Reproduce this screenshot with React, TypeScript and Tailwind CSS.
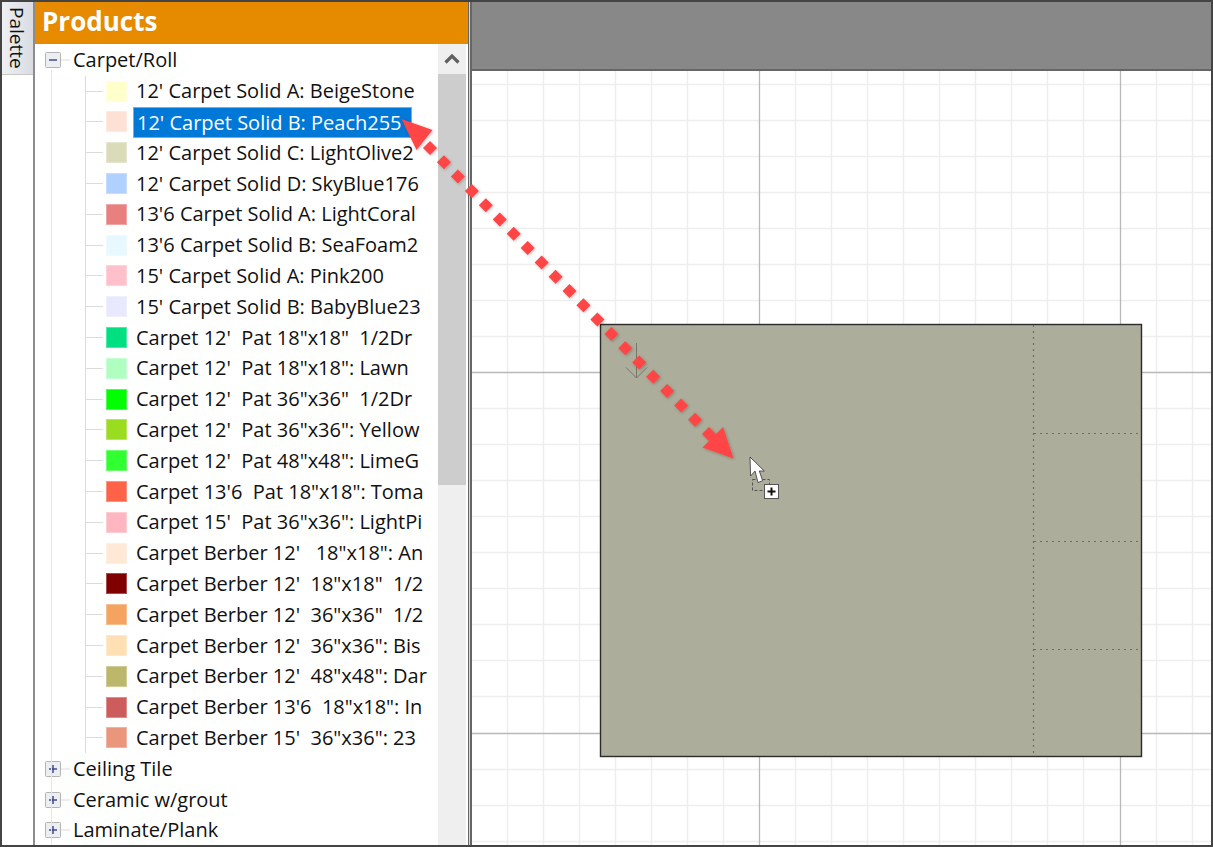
import React from 'react';

const items: { color: string; label: string; selected?: boolean }[] = [
  { color: '#FFFFCC', label: "12' Carpet Solid A: BeigeStone" },
  { color: '#FFE0D5', label: "12' Carpet Solid B: Peach255", selected: true },
  { color: '#DADBB8', label: "12' Carpet Solid C: LightOlive2" },
  { color: '#B0D0FF', label: "12' Carpet Solid D: SkyBlue176" },
  { color: '#E98080', label: "13'6 Carpet Solid A: LightCoral" },
  { color: '#E8F8FF', label: "13'6 Carpet Solid B: SeaFoam2" },
  { color: '#FFC0CB', label: "15' Carpet Solid A: Pink200" },
  { color: '#E8E8FF', label: "15' Carpet Solid B: BabyBlue23" },
  { color: '#00E080', label: 'Carpet 12\'  Pat 18"x18"  1/2Dr' },
  { color: '#AEFFC0', label: 'Carpet 12\'  Pat 18"x18": Lawn' },
  { color: '#00FF00', label: 'Carpet 12\'  Pat 36"x36"  1/2Dr' },
  { color: '#9ADC20', label: 'Carpet 12\'  Pat 36"x36": Yellow' },
  { color: '#30FF30', label: 'Carpet 12\'  Pat 48"x48": LimeG' },
  { color: '#FF6347', label: 'Carpet 13\'6  Pat 18"x18": Toma' },
  { color: '#FFB6C1', label: 'Carpet 15\'  Pat 36"x36": LightPi' },
  { color: '#FFE8D6', label: 'Carpet Berber 12\'   18"x18": An' },
  { color: '#800000', label: 'Carpet Berber 12\'  18"x18"  1/2' },
  { color: '#F4A460', label: 'Carpet Berber 12\'  36"x36"  1/2' },
  { color: '#FFE0B5', label: 'Carpet Berber 12\'  36"x36": Bis' },
  { color: '#BDB76B', label: 'Carpet Berber 12\'  48"x48": Dar' },
  { color: '#CD5C5C', label: 'Carpet Berber 13\'6  18"x18": In' },
  { color: '#E9967A', label: 'Carpet Berber 15\'  36"x36": 23' },
];

const Expander = ({ open }: { open?: boolean }) => (
  <svg width="30" height="18" viewBox="0 0 30 18" className="shrink-0">
    <line x1="16" y1="9" x2="25" y2="9" stroke="#dcdcdc" />
    <rect x="0.5" y="1.5" width="15" height="15" rx="1" fill="#eceef2" stroke="#b4b4b4" />
    <line x1="4" y1="9" x2="12" y2="9" stroke="#31418f" strokeWidth="1.4" />
    {!open && <line x1="8" y1="5" x2="8" y2="13" stroke="#31418f" strokeWidth="1.4" />}
  </svg>
);

const Category = ({ label, open }: { label: string; open?: boolean }) => (
  <div className="flex items-center h-[30.8px] pl-[10px]">
    <Expander open={open} />
    <span className="text-[#111] -ml-[2px]">{label}</span>
  </div>
);

const ItemRow = ({ color, label, selected }: { color: string; label: string; selected?: boolean }) => (
  <div className="flex items-center h-[30.8px] pl-[51px]">
    <div className="w-[17px] h-px bg-[#dcdcdc] shrink-0" />
    <div className="w-[21px] h-[21px] ml-[3px] shrink-0 border border-white/30" style={{ backgroundColor: color }} />
    {selected ? (
      <span className="ml-[6px] pl-[3px] w-[279px] h-[31px] leading-[29px] bg-[#0078D7] border border-[#c89a70] text-white shrink-0">
        {label}
      </span>
    ) : (
      <span className="ml-[9px] text-[#111] shrink-0">{label}</span>
    )}
  </div>
);

const diamonds = Array.from({ length: 21 }, (_, i) => ({ x: 430 + i * 13.95, y: 148 + i * 14.3 }));

const Canvas = () => (
  <svg width="741" height="776" viewBox="472 71 741 776" className="block">
    <rect x="472" y="71" width="741" height="776" fill="#ffffff" />
    {[507, 543, 579, 615, 651, 687, 723, 795, 831, 867, 903, 939, 975, 1011, 1047, 1083, 1156, 1192].map((x) => (
      <line key={x} x1={x + 0.5} y1="71" x2={x + 0.5} y2="847" stroke="#eeeeee" strokeWidth="1.5" />
    ))}
    {[84, 120, 156, 192, 228, 264, 300, 336, 408, 444, 480, 516, 552, 588, 624, 660, 696, 769, 805, 841].map((y) => (
      <line key={y} x1="472" y1={y + 0.5} x2="1213" y2={y + 0.5} stroke="#eeeeee" strokeWidth="1.5" />
    ))}
    <line x1="759.5" y1="71" x2="759.5" y2="847" stroke="#b8b8b8" strokeWidth="1.3" />
    <line x1="1120.5" y1="71" x2="1120.5" y2="847" stroke="#b8b8b8" strokeWidth="1.3" />
    <line x1="472" y1="372.5" x2="1213" y2="372.5" stroke="#b8b8b8" strokeWidth="1.3" />
    <line x1="472" y1="733.5" x2="1213" y2="733.5" stroke="#b8b8b8" strokeWidth="1.3" />

    <rect x="600.5" y="324.5" width="541" height="432" fill="#ACAD9A" stroke="#2b2b2b" strokeWidth="1.4" />
    <line x1="1033.5" y1="325" x2="1033.5" y2="756" stroke="#6e6e64" strokeWidth="1.2" strokeDasharray="2 4" />
    {[433, 541, 649].map((y) => (
      <line key={y} x1="1034" y1={y + 0.5} x2="1139" y2={y + 0.5} stroke="#6e6e64" strokeWidth="1.2" strokeDasharray="2 4" />
    ))}

    <path d="M636.5 343V378M626 367.5L636.5 378L647 367.5" fill="none" stroke="#777768" />

    <rect x="752.5" y="479.5" width="17" height="11" fill="none" stroke="#55554f" strokeDasharray="3 2" />
    <path d="M750 457L750.6 476L755 471L758 482.5L762.7 480.7L759.3 471L764.3 471Z" fill="#ffffff" stroke="#333333" strokeWidth="0.8" />
    <rect x="764.5" y="484.5" width="14" height="14" fill="#ffffff" stroke="#555555" />
    <path d="M771.5 487.5V495.5M767.5 491.5H775.5" stroke="#111111" strokeWidth="2" />
  </svg>
);

const DragArrow = () => (
  <svg width="1213" height="847" viewBox="0 0 1213 847" className="absolute inset-0 pointer-events-none">
    <defs>
      <filter id="soft" x="-10%" y="-10%" width="120%" height="120%">
        <feDropShadow dx="1" dy="1" stdDeviation="1.5" floodColor="#000000" floodOpacity="0.25" />
      </filter>
    </defs>
    <g fill="#FF4444" filter="url(#soft)">
      {diamonds.map((d) => (
        <path key={d.x} d={`M${d.x} ${d.y - 7}L${d.x + 7} ${d.y}L${d.x} ${d.y + 7}L${d.x - 7} ${d.y}Z`} />
      ))}
      <path d="M401.5 119L432.5 130L416.5 150Z" />
      <path d="M733.5 458.5L723 427L702.5 447.5Z" />
    </g>
  </svg>
);

export default function App() {
  return (
    <div className="relative w-[1213px] h-[847px] overflow-hidden bg-white font-['Open_Sans','Noto_Sans',sans-serif]">
      <div className="flex w-full h-full border-2 border-[#444444]">
        {/* Palette rail */}
        <div className="w-[33px] shrink-0 bg-white border-r-2 border-[#8c8c8c]">
          <div className="w-[31px] h-[73px] bg-gradient-to-r from-[#eef0f3] to-[#d9dce1] border-b border-[#c8c8c8] flex justify-center pt-[5px] pr-[2px]">
            <span className="[writing-mode:vertical-rl] text-[19px] leading-none text-[#111]">Palette</span>
          </div>
        </div>

        {/* Products panel */}
        <div className="w-[433px] shrink-0 flex flex-col">
          <div className="h-[42px] shrink-0 bg-[#E68A00] text-white font-bold text-[26px] leading-[38px] pl-[7px]">
            Products
          </div>
          <div className="flex flex-1 min-h-0">
            <div className="w-[403px] overflow-hidden text-[20px] whitespace-pre pt-[1px]">
              <Category label="Carpet/Roll" open />
              <div className="relative">
                <div className="absolute left-[50px] top-0 h-[677px] w-px bg-[#dcdcdc]" />
                <div className="absolute left-[16px] -top-[6px] h-[800px] w-px bg-[#e6e6e6]" />
                {items.map((item) => (
                  <ItemRow key={item.label} {...item} />
                ))}
                <Category label="Ceiling Tile" />
                <Category label="Ceramic w/grout" />
                <Category label="Laminate/Plank" />
              </div>
            </div>
            <div className="w-[28px] shrink-0 bg-[#EFEFEF] flex flex-col">
              <div className="h-[30px] flex items-center justify-center">
                <svg width="16" height="14" viewBox="0 0 16 14">
                  <path d="M1.5 10.5L8 4L14.5 10.5" fill="none" stroke="#606060" strokeWidth="3.2" />
                </svg>
              </div>
              <div className="h-[411px] bg-[#CDCDCD]" />
            </div>
            <div className="w-[2px] shrink-0 bg-white" />
          </div>
        </div>

        {/* Splitter */}
        <div className="w-[4px] shrink-0 flex">
          <div className="w-px bg-[#666666]" />
          <div className="w-px bg-[#d8d8d8]" />
          <div className="w-[2px] bg-[#666666]" />
        </div>

        {/* Canvas side */}
        <div className="flex-1 min-w-0 flex flex-col">
          <div className="h-[67px] shrink-0 bg-[#888888] border-b-2 border-[#666666] box-content" />
          <div className="flex-1 min-h-0 overflow-hidden">
            <Canvas />
          </div>
        </div>
      </div>
      <DragArrow />
    </div>
  );
}
